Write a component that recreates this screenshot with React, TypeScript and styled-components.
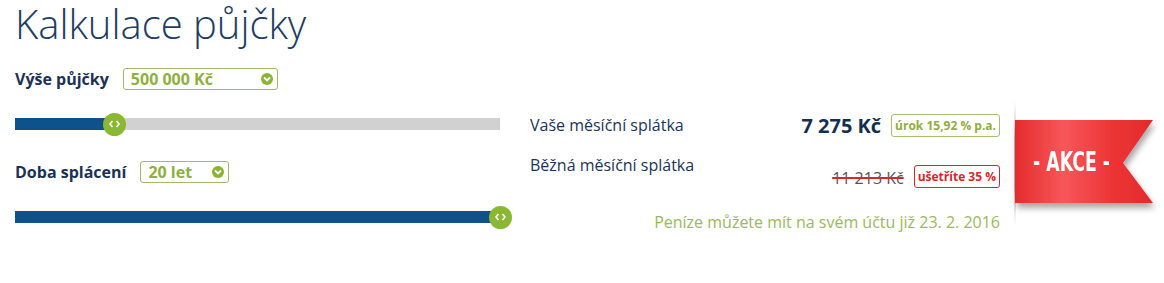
import React from "react";
import styled, { createGlobalStyle } from "styled-components";

const GlobalStyle = createGlobalStyle`
  html, body {
    margin: 0;
    padding: 0;
    background: #fff;
  }
  body {
    font-family: "Open Sans", "Liberation Sans", sans-serif;
    color: #1b3455;
  }
`;

const Page = styled.div`
  display: flex;
  align-items: flex-start;
  padding: 0 0 0 15px;
  width: 1164px;
  box-sizing: border-box;
`;

const LeftCol = styled.div`
  width: 485px;
  display: flex;
  flex-direction: column;
`;

const Title = styled.h1`
  margin: 0;
  font-size: 40px;
  line-height: 47px;
  font-weight: 300;
  color: #1d3d61;
`;

const FieldRow = styled.div<{ $top: number }>`
  display: flex;
  align-items: center;
  gap: 14px;
  margin-top: ${(p) => p.$top}px;
  height: 22px;
`;

const Label = styled.span`
  font-size: 16px;
  font-weight: 700;
  color: #1b3252;
`;

const Select = styled.div<{ $width: number }>`
  width: ${(p) => p.$width}px;
  height: 22px;
  box-sizing: border-box;
  border: 1px solid #a3b868;
  border-radius: 3px;
  display: flex;
  align-items: center;
  justify-content: space-between;
  padding: 0 4px 0 7px;
  font-size: 16px;
  font-weight: 700;
  color: #8fb03e;
`;

const Chevron = styled.span`
  width: 12px;
  height: 12px;
  border-radius: 50%;
  background: #8ab434;
  display: flex;
  align-items: center;
  justify-content: center;
`;

const Track = styled.div<{ $top: number }>`
  position: relative;
  height: 12px;
  margin-top: ${(p) => p.$top}px;
  background: #d1d1d1;
`;

const Fill = styled.div`
  height: 100%;
  background: #0f518a;
`;

const Thumb = styled.div`
  position: absolute;
  top: 50%;
  width: 23px;
  height: 23px;
  margin: -11.5px 0 0 -11.5px;
  border-radius: 50%;
  background: #8ab832;
  display: flex;
  align-items: center;
  justify-content: center;
`;

const RightCol = styled.div`
  width: 470px;
  margin: 112px 0 0 30px;
  display: flex;
  flex-direction: column;
`;

const ResultRow = styled.div<{ $top?: number }>`
  display: flex;
  justify-content: space-between;
  align-items: flex-start;
  margin-top: ${(p) => p.$top ?? 0}px;
`;

const ResultLabel = styled.span<{ $offset: number }>`
  font-size: 16px;
  line-height: 22px;
  margin-top: ${(p) => p.$offset}px;
  color: #1b3455;
`;

const Values = styled.div<{ $offset: number }>`
  display: flex;
  align-items: center;
  gap: 10px;
  margin-top: ${(p) => p.$offset}px;
`;

const Amount = styled.span`
  font-size: 20px;
  font-weight: 700;
  color: #142f52;
`;

const OldAmount = styled.span`
  font-size: 16px;
  line-height: 20px;
  padding-top: 3px;
  color: #555;
  text-decoration: line-through;
  text-decoration-color: #d9262a;
  text-decoration-thickness: 1.5px;
`;

const Badge = styled.span<{ $tone: "green" | "red" }>`
  height: 23px;
  box-sizing: border-box;
  display: inline-flex;
  align-items: center;
  padding: 0 3px;
  border-radius: 3px;
  font-size: 12px;
  font-weight: 700;
  border: 1px solid ${(p) => (p.$tone === "green" ? "#a9bf6c" : "#d9262a")};
  color: ${(p) => (p.$tone === "green" ? "#8fae3c" : "#d9262a")};
`;

const Note = styled.div`
  margin-top: 23px;
  text-align: right;
  font-size: 16px;
  color: #9bb85c;
`;

const Ribbon = styled.div`
  position: relative;
  width: 159px;
  height: 140px;
  margin: 95px 0 0 5px;
`;

const RibbonText = styled.span`
  position: absolute;
  left: 10px;
  top: 25px;
  width: 113px;
  height: 83px;
  display: flex;
  align-items: center;
  justify-content: center;
  font-family: "DejaVu Sans Condensed", "DejaVu Sans", sans-serif;
  font-weight: 700;
  font-size: 26px;
  color: #fff;
  white-space: pre;
  transform: scaleX(0.74);
`;

const Arrows = () => (
  <svg width="11" height="8" viewBox="0 0 11 8">
    <path d="M3.5 1 L1 4 L3.5 7 M7.5 1 L10 4 L7.5 7" fill="none" stroke="#fff" strokeWidth="1.6" />
  </svg>
);

const Down = () => (
  <svg width="8" height="6" viewBox="0 0 8 6">
    <path d="M1 1.5 L4 4.5 L7 1.5" fill="none" stroke="#fff" strokeWidth="1.8" />
  </svg>
);

const Slider = ({ value, top }: { value: number; top: number }) => (
  <Track $top={top}>
    <Fill style={{ width: `${value * 100}%` }} />
    <Thumb style={{ left: `${value * 100}%` }}>
      <Arrows />
    </Thumb>
  </Track>
);

const RibbonShape = () => (
  <svg width="159" height="140" viewBox="0 0 159 140">
    <defs>
      <linearGradient id="rb" x1="0" x2="1" y1="0" y2="0">
        <stop offset="0" stopColor="#e52b2c" />
        <stop offset="0.35" stopColor="#f7575a" />
        <stop offset="0.7" stopColor="#ec3536" />
        <stop offset="1" stopColor="#e42a2b" />
      </linearGradient>
      <linearGradient id="pole" x1="0" x2="0" y1="0" y2="1">
        <stop offset="0" stopColor="#ccc" stopOpacity="0" />
        <stop offset="0.3" stopColor="#bbb" />
        <stop offset="0.7" stopColor="#bbb" />
        <stop offset="1" stopColor="#ccc" stopOpacity="0" />
      </linearGradient>
      <filter id="sh" x="-20%" y="-20%" width="140%" height="150%">
        <feGaussianBlur in="SourceAlpha" stdDeviation="3" />
        <feOffset dx="2" dy="5" />
        <feComponentTransfer>
          <feFuncA type="linear" slope="0.35" />
        </feComponentTransfer>
        <feMerge>
          <feMergeNode />
          <feMergeNode in="SourceGraphic" />
        </feMerge>
      </filter>
    </defs>
    <rect x="9" y="6" width="2" height="125" fill="url(#pole)" />
    <polygon points="10,25 148,25 118,68 148,108 10,108" fill="url(#rb)" filter="url(#sh)" />
  </svg>
);

export default function App() {
  return (
    <>
      <GlobalStyle />
      <Page>
        <LeftCol>
          <Title>Kalkulace půjčky</Title>
          <FieldRow $top={21}>
            <Label>Výše půjčky</Label>
            <Select $width={155}>
              <span>500 000 Kč</span>
              <Chevron>
                <Down />
              </Chevron>
            </Select>
          </FieldRow>
          <Slider value={0.206} top={28} />
          <FieldRow $top={31}>
            <Label>Doba splácení</Label>
            <Select $width={89}>
              <span>20 let</span>
              <Chevron>
                <Down />
              </Chevron>
            </Select>
          </FieldRow>
          <Slider value={1} top={28} />
        </LeftCol>
        <RightCol>
          <ResultRow>
            <ResultLabel $offset={2}>Vaše měsíční splátka</ResultLabel>
            <Values $offset={0}>
              <Amount>7 275 Kč</Amount>
              <Badge $tone="green">úrok 15,92 % p.a.</Badge>
            </Values>
          </ResultRow>
          <ResultRow $top={15}>
            <ResultLabel $offset={0}>Běžná měsíční splátka</ResultLabel>
            <Values $offset={11}>
              <OldAmount>11 213 Kč</OldAmount>
              <Badge $tone="red">ušetříte 35 %</Badge>
            </Values>
          </ResultRow>
          <Note>Peníze můžete mít na svém účtu již 23. 2. 2016</Note>
        </RightCol>
        <Ribbon>
          <RibbonShape />
          <RibbonText>{"- AKCE -"}</RibbonText>
        </Ribbon>
      </Page>
    </>
  );
}
